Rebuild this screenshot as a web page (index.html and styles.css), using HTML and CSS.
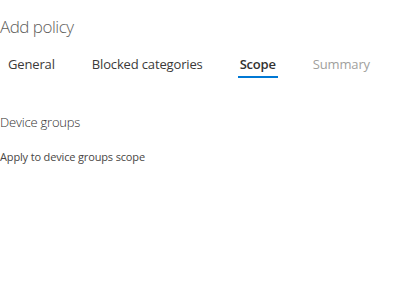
FILE: index.html
```html
<!DOCTYPE html>
<html>
<head>
<meta charset="utf-8">
<link rel="stylesheet" href="styles.css">
</head>
<body>
<div class="panel">
  <h1 class="title">Add policy</h1>
  <nav class="tabs">
    <span class="tab">General</span>
    <span class="tab">Blocked categories</span>
    <span class="tab active">Scope</span>
    <span class="tab disabled">Summary</span>
  </nav>
  <section class="section">
    <h2 class="section-title">Device groups</h2>
    <p class="section-text">Apply to device groups scope</p>
  </section>
</div>
</body>
</html>
```
FILE: styles.css
```css
html, body {
  margin: 0;
  padding: 0;
  background: #ffffff;
}
body {
  font-family: "Open Sans", "Noto Sans", sans-serif;
  color: #323130;
}
.panel {
  display: flex;
  flex-direction: column;
  padding-top: 15px;
}
.title {
  margin: 0;
  font-size: 17px;
  font-weight: 300;
  line-height: 24px;
  letter-spacing: -0.5px;
  color: #605e5c;
}
.tabs {
  display: flex;
  gap: 33px;
  margin-top: 15px;
  padding-left: 6px;
}
.tab {
  flex: none;
  white-space: nowrap;
  font-size: 13px;
  line-height: 20px;
  letter-spacing: -0.15px;
  padding: 0 2px 2px;
  border-bottom: 2px solid transparent;
  color: #3b3a39;
}
.tab.active {
  font-weight: 600;
  letter-spacing: -0.2px;
  color: #323130;
  border-bottom-color: #0078d4;
}
.tab.disabled {
  color: #a19f9d;
}
.section {
  margin-top: 34px;
}
.section-title {
  margin: 0;
  font-size: 13px;
  font-weight: 300;
  line-height: 20px;
  letter-spacing: -0.2px;
  color: #323130;
}
.section-text {
  margin: 17px 0 0;
  font-size: 11px;
  line-height: 16px;
  letter-spacing: -0.15px;
  color: #484644;
}
```
